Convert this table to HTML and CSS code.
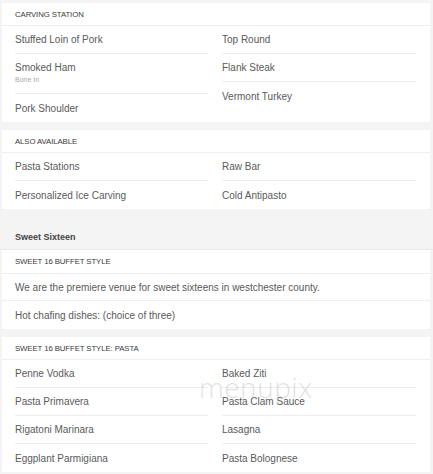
FILE: index.html
```html
<!DOCTYPE html>
<html>
<head>
<meta charset="utf-8">
<link rel="stylesheet" href="styles.css">
</head>
<body>
<div class="page">
  <section class="card">
    <div class="card-head">CARVING STATION</div>
    <div class="cols">
      <ul class="col">
        <li class="item">Stuffed Loin of Pork</li>
        <li class="item item-desc">Smoked Ham<span class="desc">Bone In</span></li>
        <li class="item">Pork Shoulder</li>
      </ul>
      <ul class="col">
        <li class="item">Top Round</li>
        <li class="item">Flank Steak</li>
        <li class="item">Vermont Turkey</li>
      </ul>
    </div>
  </section>

  <section class="card">
    <div class="card-head">ALSO AVAILABLE</div>
    <div class="cols">
      <ul class="col">
        <li class="item">Pasta Stations</li>
        <li class="item">Personalized Ice Carving</li>
      </ul>
      <ul class="col">
        <li class="item">Raw Bar</li>
        <li class="item">Cold Antipasto</li>
      </ul>
    </div>
  </section>

  <h2 class="section-title">Sweet Sixteen</h2>

  <section class="card card-flush">
    <div class="card-head head-tall">SWEET 16 BUFFET STYLE</div>
    <ul class="list">
      <li class="row">We are the premiere venue for sweet sixteens in westchester county.</li>
      <li class="row">Hot chafing dishes: (choice of three)</li>
    </ul>
  </section>

  <section class="card card-last">
    <div class="card-head">SWEET 16 BUFFET STYLE: PASTA</div>
    <div class="cols">
      <ul class="col">
        <li class="item">Penne Vodka</li>
        <li class="item">Pasta Primavera</li>
        <li class="item">Rigatoni Marinara</li>
        <li class="item">Eggplant Parmigiana</li>
      </ul>
      <ul class="col">
        <li class="item">Baked Ziti</li>
        <li class="item">Pasta Clam Sauce</li>
        <li class="item">Lasagna</li>
        <li class="item">Pasta Bolognese</li>
      </ul>
    </div>
    <div class="watermark" aria-hidden="true">menupix</div>
  </section>
</div>
</body>
</html>
```

FILE: styles.css
```css
* { box-sizing: border-box; }
html, body {
  margin: 0;
  padding: 0;
  background: #f4f4f4;
  font-family: "Liberation Sans", Arial, sans-serif;
  color: #5a5a5a;
}
.page {
  padding: 3px 3px 0 2px;
  display: flex;
  flex-direction: column;
}
ul { list-style: none; margin: 0; padding: 0; }

.card {
  background: #fff;
  position: relative;
  margin-bottom: 8px;
}
.card-head {
  height: 23px;
  display: flex;
  align-items: center;
  padding: 0 13px;
  font-size: 7.8px;
  color: #3a3a3a;
  border-bottom: 1px solid #f0f0f0;
  letter-spacing: -0.1px;
}
.head-tall { height: 24px; }

.cols {
  display: grid;
  grid-template-columns: 193px 194px;
  column-gap: 14px;
  padding: 0 14px 0 13px;
}
.col { display: flex; flex-direction: column; }
.item {
  height: 28px;
  display: flex;
  flex-direction: column;
  justify-content: center;
  font-size: 10px;
  color: #5a5a5a;
  border-bottom: 1px solid #eeeeee;
}
.item:last-child { border-bottom: none; }
.item-desc {
  height: 40px;
  justify-content: flex-start;
  padding-top: 8px;
}
.desc {
  font-size: 7px;
  color: #aaa;
  margin-top: 3px;
}

.section-title {
  margin: 0 -3px 0 -2px;
  padding: 21px 15px 5px;
  font-size: 9px;
  line-height: 14px;
  font-weight: bold;
  color: #444;
  border-bottom: 1px solid #e8e8e8;
  height: 41px;
  position: relative;
  top: -8px;
  margin-bottom: -8px;
}

.list { display: flex; flex-direction: column; }
.row {
  height: 27px;
  display: flex;
  align-items: center;
  padding: 0 13px;
  font-size: 10px;
  color: #5a5a5a;
  border-bottom: 1px solid #f0f0f0;
}
.row:last-child { border-bottom: none; height: 28px; }

.watermark {
  position: absolute;
  left: 197px;
  top: 31px;
  font-family: "Open Sans", sans-serif;
  font-weight: 300;
  font-size: 28px;
  letter-spacing: 0.5px;
  color: rgba(180, 180, 180, 0.4);
  pointer-events: none;
}
```
